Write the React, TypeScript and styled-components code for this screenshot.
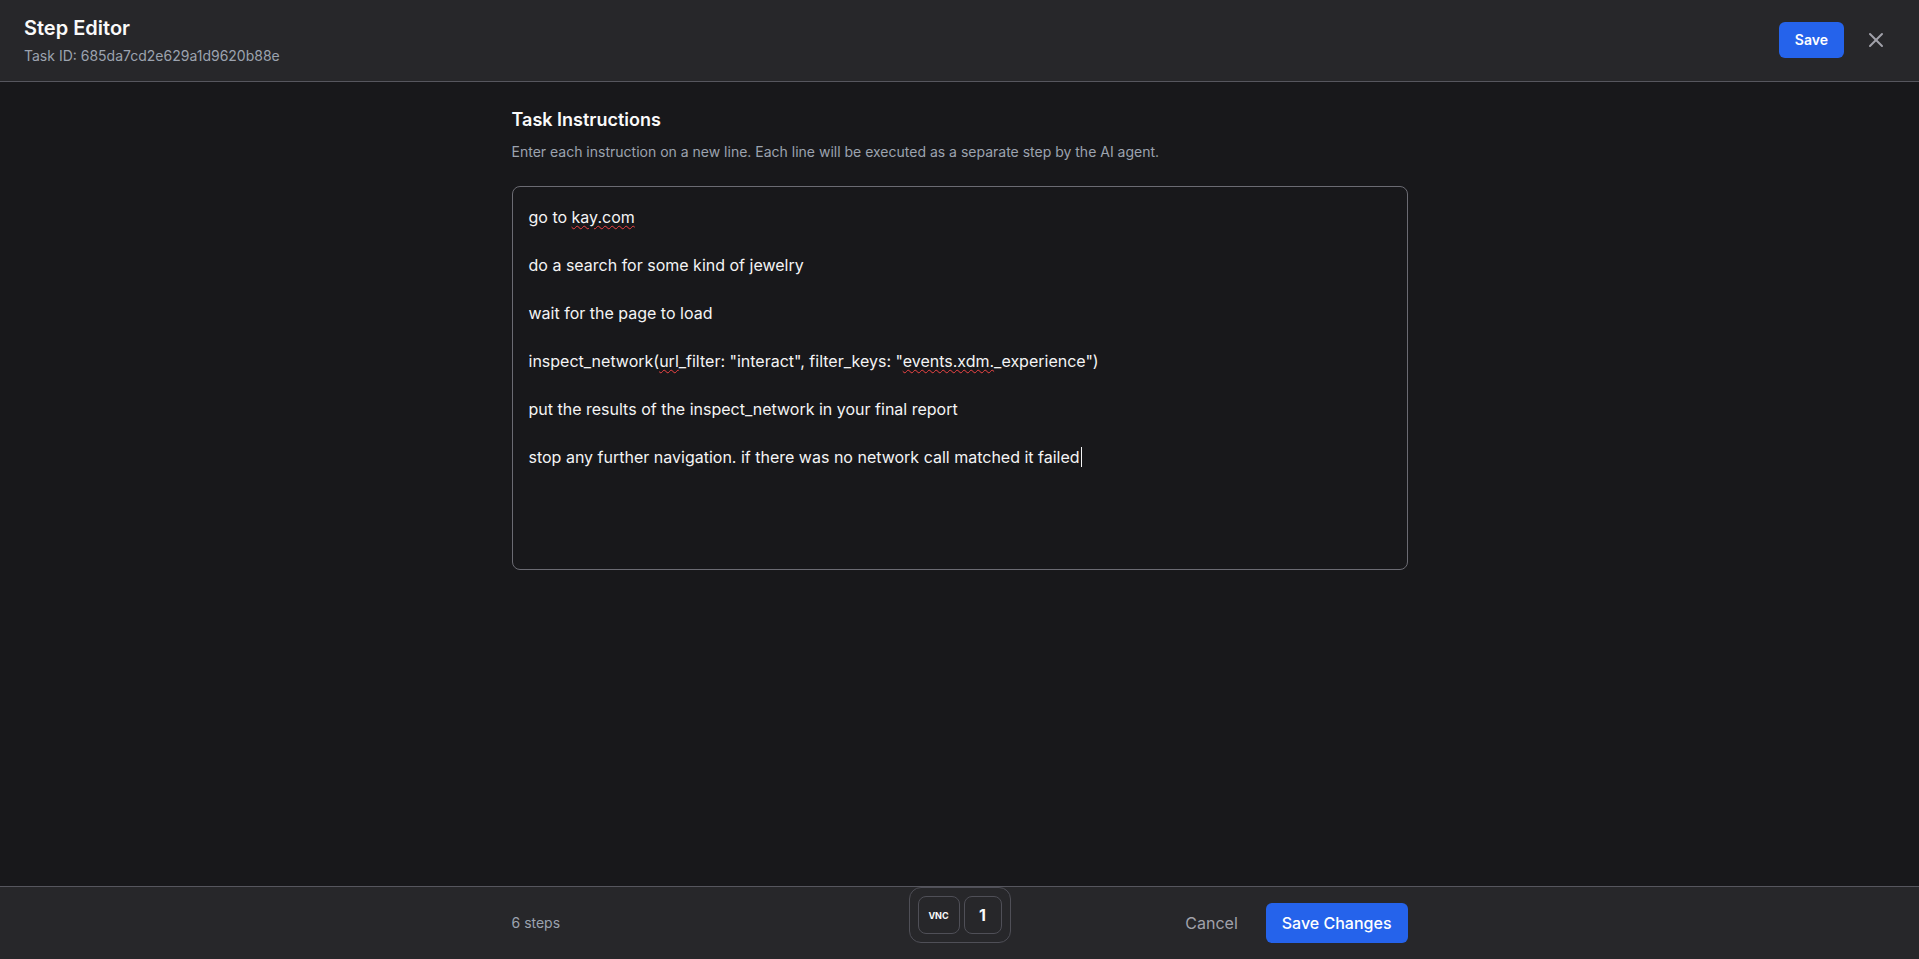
import styled, { createGlobalStyle } from "styled-components";
import { X } from "lucide-react";

const GlobalStyle = createGlobalStyle`
  * {
    box-sizing: border-box;
  }
  html,
  body {
    margin: 0;
    padding: 0;
    height: 100%;
    background-color: #18181b;
    font-family: Inter, "Noto Sans", "Liberation Sans", sans-serif;
  }
  #root {
    height: 100%;
  }
`;

const App = () => {
  const steps = [
    <>
      go to <Misspelled>kay.com</Misspelled>
    </>,
    <>do a search for some kind of jewelry</>,
    <>wait for the page to load</>,
    <>
      inspect_network(<Misspelled>url</Misspelled>_filter: "interact", filter_keys: "
      <Misspelled>events.xdm.</Misspelled>_experience")
    </>,
    <>put the results of the inspect_network in your final report</>,
    <>stop any further navigation. if there was no network call matched it failed</>,
  ];

  return (
    <>
      <GlobalStyle />
      <Page>
        <Header>
          <TitleBlock>
            <Title>Step Editor</Title>
            <SubTitle>Task ID: 685da7cd2e629a1d9620b88e</SubTitle>
          </TitleBlock>
          <HeaderActions>
            <PrimaryButton $size="sm">Save</PrimaryButton>
            <CloseButton aria-label="Close">
              <X size={24} strokeWidth={2} />
            </CloseButton>
          </HeaderActions>
        </Header>

        <Main>
          <Column>
            <SectionTitle>Task Instructions</SectionTitle>
            <Hint>
              Enter each instruction on a new line. Each line will be executed as a
              separate step by the AI agent.
            </Hint>
            <Editor role="textbox" aria-multiline="true">
              {steps.map((s, i) => (
                <Line key={i}>
                  {s}
                  {i === steps.length - 1 && <Caret />}
                </Line>
              ))}
            </Editor>
          </Column>
        </Main>

        <Footer>
          <FooterInner>
            <StepCount>{steps.length} steps</StepCount>
            <FooterActions>
              <GhostButton>Cancel</GhostButton>
              <PrimaryButton $size="md">Save Changes</PrimaryButton>
            </FooterActions>
          </FooterInner>
        </Footer>

        <Dock>
          <DockButton $small>VNC</DockButton>
          <DockButton>1</DockButton>
        </Dock>
      </Page>
    </>
  );
};

export default App;

const Page = styled.div`
  height: 100vh;
  display: flex;
  flex-direction: column;
  background-color: #18181b;
  color: #fafafa;
`;

const Header = styled.header`
  flex: none;
  display: flex;
  align-items: center;
  justify-content: space-between;
  padding: 14px 23px 15px 24px;
  background-color: #27272a;
  border-bottom: 1px solid #56565e;
`;

const TitleBlock = styled.div`
  display: flex;
  flex-direction: column;
  gap: 4px;
`;

const Title = styled.h1`
  margin: 0;
  font-size: 20px;
  line-height: 28px;
  font-weight: 600;
  color: #fafafa;
`;

const SubTitle = styled.div`
  font-size: 14px;
  line-height: 20px;
  color: #9ca3af;
`;

const HeaderActions = styled.div`
  display: flex;
  align-items: center;
  gap: 12px;
`;

const PrimaryButton = styled.button<{ $size: "sm" | "md" }>`
  border: none;
  border-radius: 6px;
  background-color: #2563eb;
  color: #ffffff;
  font-family: inherit;
  cursor: pointer;
  padding: 8px 16px;
  font-size: ${(p) => (p.$size === "sm" ? "14px" : "16px")};
  line-height: ${(p) => (p.$size === "sm" ? "20px" : "24px")};
  font-weight: ${(p) => (p.$size === "sm" ? 600 : 500)};
`;

const CloseButton = styled.button`
  display: flex;
  align-items: center;
  justify-content: center;
  padding: 8px;
  border: none;
  background: transparent;
  color: #a1a1aa;
  cursor: pointer;
`;

const Main = styled.main`
  flex: 1;
  overflow: auto;
  padding: 24px;
`;

const Column = styled.div`
  max-width: 896px;
  margin: 0 auto;
`;

const SectionTitle = styled.h2`
  margin: 0 0 8px;
  font-size: 18px;
  line-height: 28px;
  font-weight: 600;
  color: #fafafa;
`;

const Hint = styled.p`
  margin: 0 0 24px;
  font-size: 14px;
  line-height: 20px;
  color: #9ca3af;
`;

const Editor = styled.div`
  height: 384px;
  padding: 18px 16px 16px;
  border: 1px solid #6b6b73;
  border-radius: 8px;
  background-color: #18181b;
  color: #f4f4f5;
  font-size: 16px;
  line-height: 24px;
  display: flex;
  flex-direction: column;
  gap: 24px;
`;

const Line = styled.div`
  white-space: pre;
`;

const Misspelled = styled.span`
  text-decoration: underline wavy #ef4444;
  text-decoration-thickness: 1px;
  text-underline-offset: 2px;
`;

const Caret = styled.span`
  display: inline-block;
  width: 1px;
  height: 20px;
  margin-left: 1px;
  vertical-align: -4px;
  background-color: #f4f4f5;
`;

const Footer = styled.footer`
  flex: none;
  padding: 16px 24px;
  background-color: #27272a;
  border-top: 1px solid #56565e;
`;

const FooterInner = styled.div`
  max-width: 896px;
  margin: 0 auto;
  display: flex;
  align-items: center;
  justify-content: space-between;
`;

const StepCount = styled.span`
  font-size: 14px;
  line-height: 20px;
  color: #9ca3af;
`;

const FooterActions = styled.div`
  display: flex;
  align-items: center;
  gap: 12px;
`;

const GhostButton = styled.button`
  padding: 8px 16px;
  border: none;
  background: transparent;
  color: #a1a1aa;
  font-family: inherit;
  font-size: 16px;
  line-height: 24px;
  cursor: pointer;
`;

const Dock = styled.div`
  position: fixed;
  left: 50%;
  bottom: 16px;
  transform: translateX(-50%);
  display: flex;
  gap: 4px;
  padding: 8px;
  border: 1px solid #4f4f57;
  border-radius: 12px;
  background-color: #27272a;
`;

const DockButton = styled.button<{ $small?: boolean }>`
  height: 38px;
  width: ${(p) => (p.$small ? "42px" : "38px")};
  display: flex;
  align-items: center;
  justify-content: center;
  border: 1px solid #4f4f57;
  border-radius: 8px;
  background-color: #27272a;
  color: #fafafa;
  font-family: inherit;
  font-weight: 700;
  font-size: ${(p) => (p.$small ? "9px" : "16px")};
  cursor: pointer;
`;
